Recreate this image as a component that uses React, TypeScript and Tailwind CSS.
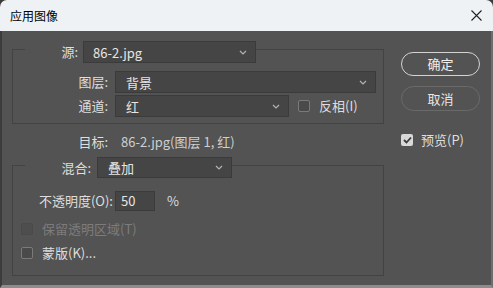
import React from 'react';

const font = { fontFamily: '"Noto Sans CJK SC", "Liberation Sans", sans-serif' };

function Chevron() {
  return (
    <svg width="8" height="5" viewBox="0 0 8 5" className="shrink-0">
      <path d="M1 1 L4 4 L7 1" fill="none" stroke="#b4b4b4" strokeWidth="1.2" />
    </svg>
  );
}

function Select({ value, className }: { value: string; className: string }) {
  return (
    <div
      className={`flex items-center justify-between bg-[#454545] border border-[#3b3b3b] pr-[8px] text-[13px] text-[#e6e6e6] ${className}`}
    >
      <span className="leading-none">{value}</span>
      <Chevron />
    </div>
  );
}

function Box({ checked, disabled }: { checked?: boolean; disabled?: boolean }) {
  if (checked) {
    return (
      <div className="w-[12px] h-[12px] rounded-[2px] bg-[#d9d9d9] flex items-center justify-center shrink-0">
        <svg width="9" height="8" viewBox="0 0 9 8">
          <path d="M1 4 L3.5 6.5 L8 1.5" fill="none" stroke="#3a3a3a" strokeWidth="1.8" />
        </svg>
      </div>
    );
  }
  return (
    <div
      className={`w-[12px] h-[12px] rounded-[2px] border shrink-0 ${
        disabled ? 'bg-[#4e4e4e] border-[#4a4a4a]' : 'bg-[#4a4a4a] border-[#7a7a7a]'
      }`}
    />
  );
}

export default function App() {
  return (
    <div className="w-[493px] h-[288px] flex flex-col bg-[#3a3a3a] select-none" style={font}>
      {/* title bar */}
      <div className="h-[31px] shrink-0 bg-[#eef2f5] rounded-t-[7px] flex items-center justify-between pl-[10px] pr-[11px]">
        <span className="text-[12px] text-black">应用图像</span>
        <svg width="11" height="11" viewBox="0 0 11 11">
          <path d="M0.5 0.5 L10.5 10.5 M10.5 0.5 L0.5 10.5" stroke="#222" strokeWidth="1.1" />
        </svg>
      </div>

      {/* body */}
      <div className="flex-1 bg-[#535353] flex pl-[12px] border-l-2 border-l-[#3c3c3c] border-r-2 border-r-[#6e6e6e] border-b-[3px] border-b-[#8c8c8c] -ml-0">
        <div className="w-[372px] flex flex-col -ml-[2px]">
          {/* source group */}
          <div className="mt-[18px] h-[75px] border border-[#434343] flex flex-col">
            <div className="-mt-[9px] h-[22px] flex items-center">
              <div className="ml-[12px] w-[58px] h-full bg-[#535353] flex items-center justify-end pr-[5px] text-[13px] text-[#dedede]">
                源:
              </div>
              <Select value="86-2.jpg" className="w-[173px] h-[22px] pl-[9px]" />
            </div>
            <div className="mt-[8px] h-[22px] flex items-center">
              <div className="w-[102px] flex justify-end pr-[7px] text-[13px] text-[#dedede]">图层:</div>
              <Select value="背景" className="w-[261px] h-[22px] pl-[10px]" />
            </div>
            <div className="mt-[2px] h-[22px] flex items-center">
              <div className="w-[102px] flex justify-end pr-[7px] text-[13px] text-[#dedede]">通道:</div>
              <Select value="红" className="w-[174px] h-[22px] pl-[10px]" />
              <div className="ml-[9px] flex items-center">
                <Box />
                <span className="ml-[9px] text-[13px] text-[#dedede]">反相(I)</span>
              </div>
            </div>
          </div>

          {/* target */}
          <div className="mt-[8px] h-[20px] flex items-center text-[13px]">
            <div className="w-[103px] flex justify-end pr-[7px] text-[#dedede]">目标:</div>
            <span className="ml-[6px] text-[#cfcfcf]">86-2.jpg(图层 1, 红)</span>
          </div>

          {/* blend group */}
          <div className="mt-[13px] h-[111px] border border-[#434343] flex flex-col">
            <div className="-mt-[9px] h-[21px] flex items-center">
              <div className="ml-[12px] w-[72px] h-full bg-[#535353] flex items-center justify-end pr-[6px] text-[13px] text-[#dedede]">
                混合:
              </div>
              <Select value="叠加" className="w-[135px] h-[21px] pl-[10px]" />
            </div>
            <div className="mt-[13px] h-[20px] flex items-center">
              <div className="w-[102px] flex justify-end pr-[2px] text-[13px] text-[#dedede]">不透明度(O):</div>
              <div className="w-[40px] h-[20px] bg-[#454545] border border-[#3b3b3b] flex items-center pl-[5px] text-[13px] text-[#e6e6e6]">
                50
              </div>
              <span className="ml-[12px] text-[13px] text-[#dedede]">%</span>
            </div>
            <div className="mt-[10px] h-[16px] flex items-center pl-[8px]">
              <Box disabled />
              <span className="ml-[9px] text-[13px] text-[#7c7c7c]">保留透明区域(T)</span>
            </div>
            <div className="mt-[8px] h-[16px] flex items-center pl-[8px]">
              <Box />
              <span className="ml-[9px] text-[13px] text-[#dedede]">蒙版(K)...</span>
            </div>
          </div>
        </div>

        {/* buttons */}
        <div className="ml-[17px] w-[79px] flex flex-col pt-[21px]">
          <button className="h-[24px] rounded-full border-[1.5px] border-[#d4d4d4] text-[13px] text-[#f0f0f0] flex items-center justify-center">
            确定
          </button>
          <button className="mt-[10px] h-[25px] rounded-full border-[1.5px] border-[#6a6a6a] text-[13px] text-[#e6e6e6] flex items-center justify-center">
            取消
          </button>
          <div className="mt-[19px] flex items-center">
            <Box checked />
            <span className="ml-[8px] text-[13px] text-[#dedede]">预览(P)</span>
          </div>
        </div>
      </div>
    </div>
  );
}
